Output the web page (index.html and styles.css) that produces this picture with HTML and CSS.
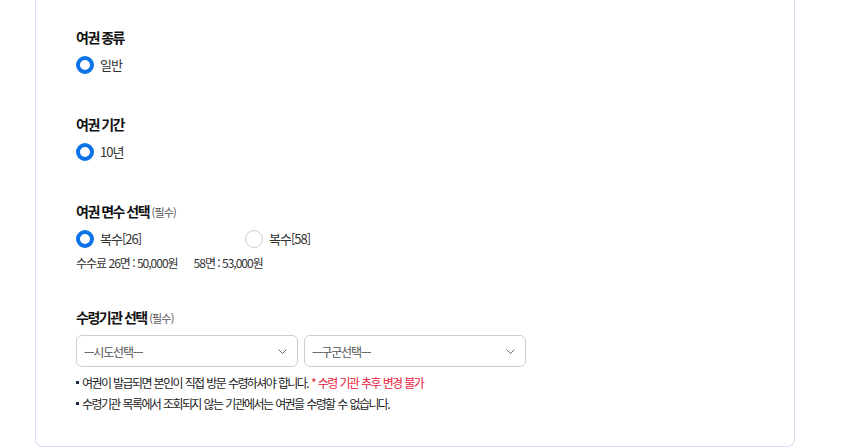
FILE: index.html
```html
<!DOCTYPE html>
<html lang="ko">
<head>
<meta charset="utf-8">
<link rel="stylesheet" href="styles.css">
</head>
<body>
<div class="card">
  <section class="field">
    <h3 class="field-title">여권 종류</h3>
    <div class="radio-row">
      <label class="opt"><span class="radio on"></span><span class="opt-text">일반</span></label>
    </div>
  </section>
  <section class="field">
    <h3 class="field-title">여권 기간</h3>
    <div class="radio-row">
      <label class="opt"><span class="radio on"></span><span class="opt-text">10년</span></label>
    </div>
  </section>
  <section class="field field-pages">
    <h3 class="field-title">여권 면수 선택 <span class="req">(필수)</span></h3>
    <div class="radio-row">
      <label class="opt"><span class="radio on"></span><span class="opt-text">복수[26]</span></label>
      <label class="opt"><span class="radio"></span><span class="opt-text">복수[58]</span></label>
    </div>
    <p class="fee"><span>수수료 26면 : 50,000원</span><span>58면 : 53,000원</span></p>
  </section>
  <section class="field field-last">
    <h3 class="field-title">수령기관 선택 <span class="req">(필수)</span></h3>
    <div class="selects">
      <div class="select"><span>---시도선택---</span><svg class="chev" width="9" height="5" viewBox="0 0 9 5"><path d="M0.5 0.5 L4.5 4.5 L8.5 0.5" fill="none" stroke="#666" stroke-width="1"/></svg></div>
      <div class="select"><span>---구군선택---</span><svg class="chev" width="9" height="5" viewBox="0 0 9 5"><path d="M0.5 0.5 L4.5 4.5 L8.5 0.5" fill="none" stroke="#666" stroke-width="1"/></svg></div>
    </div>
    <ul class="notes">
      <li>여권이 발급되면 본인이 직접 방문 수령하셔야 합니다. <em class="warn">* 수령 기관 추후 변경 불가</em></li>
      <li>수령기관 목록에서 조회되지 않는 기관에서는 여권을 수령할 수 없습니다.</li>
    </ul>
  </section>
</div>
</body>
</html>
```
FILE: styles.css
```css
* { box-sizing: border-box; }
html, body { margin: 0; padding: 0; background: #fff; }
body {
  font-family: "Noto Sans CJK KR", "Noto Sans", sans-serif;
  color: #222;
  overflow: hidden;
}
.card {
  margin-left: 35px;
  width: 760px;
  height: 447px;
  border: 1px solid #d5def3;
  border-top: none;
  border-radius: 0 0 8px 8px;
  padding: 27px 40px 0;
}
.field { padding-bottom: 39px; }
.field-pages { padding-bottom: 36px; }
.field-last { padding-bottom: 0; }
.field-title {
  margin: 0 0 8px;
  height: 20px;
  font-size: 14px;
  line-height: 20px;
  font-weight: 700;
  color: #111;
  letter-spacing: -1.5px;
}
.req {
  font-size: 11px;
  line-height: 14px;
  font-weight: 400;
  color: #555;
  letter-spacing: -0.8px;
}
.radio-row {
  display: flex;
  height: 20px;
  align-items: center;
}
.opt {
  display: flex;
  align-items: center;
  gap: 6px;
  width: 169px;
}
.radio {
  width: 18px;
  height: 18px;
  border-radius: 50%;
  border: 1px solid #cfcfcf;
  background: #fff;
  flex: none;
}
.radio.on { border: 4.5px solid #0b72e7; }
.opt-text {
  font-size: 13px;
  line-height: 20px;
  color: #333;
  letter-spacing: -1px;
}
.fee {
  margin: 6px 0 0;
  font-size: 12px;
  line-height: 16px;
  color: #333;
  letter-spacing: -1px;
  display: flex;
  gap: 16px;
}
.selects {
  margin-top: 6px;
  display: flex;
  gap: 6px;
}
.select {
  width: 222px;
  height: 32px;
  border: 1px solid #cdcdcd;
  border-radius: 6px;
  display: flex;
  align-items: center;
  justify-content: space-between;
  padding: 0 10px 0 7px;
  font-size: 12px;
  color: #555;
  letter-spacing: -1.1px;
}
.chev { display: block; }
.notes {
  list-style: none;
  margin: 5px 0 0;
  padding: 0;
  font-size: 12px;
  line-height: 21px;
  color: #222;
  letter-spacing: -1.6px;
  word-spacing: 1px;
}
.notes li { display: flex; align-items: center; }
.notes li::before {
  content: "";
  width: 3px;
  height: 3px;
  background: #1c2a4a;
  margin-right: 3px;
  flex: none;
}
.warn { font-style: normal; color: #e8173c; margin-left: 3px; }
```
